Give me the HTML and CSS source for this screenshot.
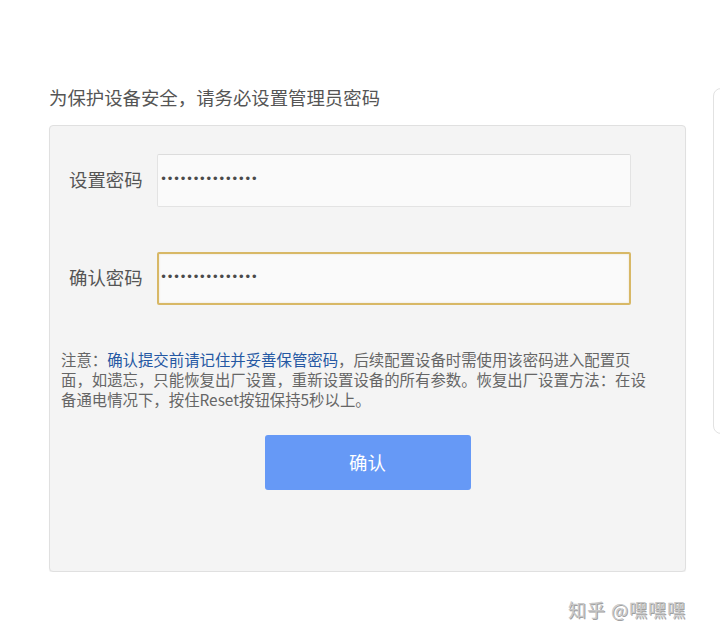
FILE: index.html
```html
<!DOCTYPE html>
<html lang="zh-CN">
<head>
  <meta charset="UTF-8">
  <title>设置管理员密码</title>
  <link rel="stylesheet" href="styles.css">
</head>
<body>
  <main class="page">
    <h2 class="tip">为保护设备安全，请务必设置管理员密码</h2>

    <form class="panel" onsubmit="return false">
      <div class="row">
        <label for="pwd">设置密码</label>
        <input id="pwd" class="pwd" type="password" value="123456789012345">
      </div>
      <div class="row">
        <label for="pwd2">确认密码</label>
        <input id="pwd2" class="pwd pwd-active" type="password" value="123456789012345">
      </div>

      <p class="note">注意：<span class="em">确认提交前请记住并妥善保管密码</span>，后续配置设备时需使用该密码进入配置页面，如遗忘，只能恢复出厂设置，重新设置设备的所有参数。恢复出厂设置方法：在设备通电情况下，按住Reset按钮保持5秒以上。</p>

      <div class="actions">
        <button type="submit">确认</button>
      </div>
    </form>
  </main>

  <div class="side-edge"></div>
  <div class="watermark">知乎 @嘿嘿嘿</div>
</body>
</html>
```

FILE: styles.css
```css
body {
  margin: 0;
  background: #fff;
  font-family: "Noto Sans CJK SC", "Noto Sans", sans-serif;
  color: #555;
  overflow: hidden;
}

.page {
  width: 637px;
  padding: 86px 0 0 49px;
}

.tip {
  margin: 0 0 17px;
  font-size: 18.4px;
  font-weight: normal;
  line-height: 22px;
  color: #555;
}

.panel {
  box-sizing: border-box;
  height: 447px;
  padding: 28px 0 0 19px;
  background: #f4f4f4;
  border: 1px solid #e0e0e0;
  border-radius: 4px;
  box-shadow: 0 1px 1px rgba(0, 0, 0, 0.06);
}

.row {
  display: flex;
  align-items: center;
  height: 53px;
  margin-bottom: 45px;
}

.row label {
  flex-shrink: 0;
  width: 75px;
  margin-right: 13px;
  padding-bottom: 4px;
  font-size: 18.4px;
  white-space: nowrap;
  color: #555;
}

.pwd {
  box-sizing: border-box;
  width: 474px;
  height: 53px;
  padding: 0 0 3px 2px;
  background: #fafafa;
  border: 1px solid #e3e3e3;
  border-top-color: #dcdcdc;
  border-radius: 2px;
  font-family: "DejaVu Sans", sans-serif;
  font-size: 12px;
  letter-spacing: -0.6px;
  color: #4a4a4a;
  outline: none;
}

.pwd-active {
  border: 2px solid #d8b866;
  padding-left: 1px;
  box-shadow: inset 0 0 2px rgba(180, 140, 50, 0.25);
}

.note {
  width: 594px;
  margin: -1px 0 0 -8px;
  font-size: 15.4px;
  line-height: 20px;
  color: #666;
}

.em {
  color: #2558a3;
}

.actions {
  display: flex;
  justify-content: center;
  margin: 26px 0 0 -19px;
}

button {
  width: 206px;
  height: 55px;
  padding-bottom: 3px;
  background: #6699f6;
  color: #fff;
  border: none;
  border-radius: 3px;
  font-family: inherit;
  font-size: 18.4px;
  cursor: pointer;
}

.side-edge {
  position: absolute;
  left: 713px;
  top: 88px;
  width: 40px;
  height: 344px;
  border: 1px solid #e2e2e2;
  border-radius: 8px;
}

.watermark {
  position: absolute;
  left: 568px;
  top: 596px;
  font-size: 18px;
  color: #c8c8c8;
  text-shadow: 1px 1px 0 #a0a0a0;
  letter-spacing: 1px;
}
```
